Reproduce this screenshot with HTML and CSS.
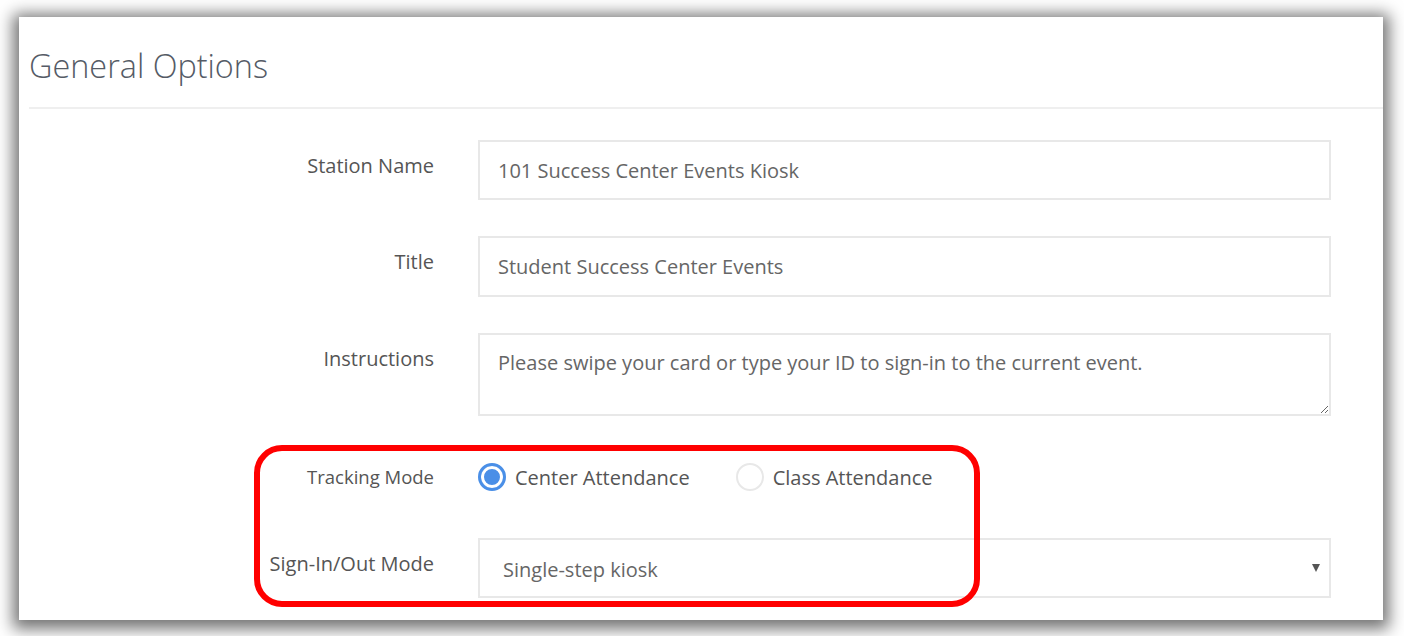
FILE: index.html
```html
<!DOCTYPE html>
<html lang="en">
<head>
<meta charset="utf-8">
<title>General Options</title>
<link rel="stylesheet" href="styles.css">
</head>
<body>
<div class="panel">
  <div class="panel-header">
    <h1 class="panel-title">General Options</h1>
  </div>
  <form class="form">
    <div class="row row-input">
      <label class="label">Station Name</label>
      <input class="field" type="text" value="101 Success Center Events Kiosk">
    </div>
    <div class="row row-input">
      <label class="label">Title</label>
      <input class="field" type="text" value="Student Success Center Events">
    </div>
    <div class="row row-textarea">
      <label class="label">Instructions</label>
      <textarea class="field area">Please swipe your card or type your ID to sign-in to the current event.</textarea>
    </div>
    <div class="row row-radio">
      <label class="label label-small">Tracking Mode</label>
      <div class="radios">
        <span class="radio-item"><span class="radio checked"></span><span class="radio-text">Center Attendance</span></span>
        <span class="radio-item"><span class="radio"></span><span class="radio-text">Class Attendance</span></span>
      </div>
    </div>
    <div class="row row-select">
      <label class="label">Sign-In/Out Mode</label>
      <div class="field select">
        <span class="select-text">Single-step kiosk</span>
        <span class="caret"></span>
      </div>
    </div>
  </form>
  <div class="highlight"></div>
</div>
</body>
</html>
```

FILE: styles.css
```css
html, body {
  margin: 0;
  padding: 0;
  background: #ffffff;
}

body {
  padding: 17px 21px 16px 19px;
  font-family: "Open Sans", "Noto Sans", sans-serif;
  color: #555;
}

.panel {
  position: relative;
  height: 603px;
  background: #fff;
  box-shadow: 0 3px 15px 6px rgba(0, 0, 0, 0.55);
  overflow: hidden;
}

.panel-header {
  box-sizing: border-box;
  margin-left: 10px;
  height: 92px;
  padding-top: 5px;
  border-bottom: 2px solid #efefef;
  display: flex;
  align-items: center;
}

.panel-title {
  margin: 0;
  font-size: 32.4px;
  font-weight: 300;
  color: #555b66;
}

.form {
  padding: 31px 52px 0 0;
  display: flex;
  flex-direction: column;
}

.row {
  display: grid;
  grid-template-columns: 415px 1fr;
  column-gap: 44px;
}

.row-input { height: 60px; margin-bottom: 36px; }
.row-input + .row-input { height: 61px; }
.row-textarea { height: 83px; margin-bottom: 36px; }
.row-radio { height: 50px; margin-bottom: 36px; align-items: center; }
.row-select { height: 60px; }

.label {
  text-align: right;
  font-size: 20px;
  color: #555;
  padding-top: 13px;
  line-height: 26px;
}

.row-radio .label { padding-top: 0; }

.label-small {
  font-size: 18.5px;
}

.field {
  box-sizing: border-box;
  width: 100%;
  height: 100%;
  margin: 0;
  border: 2px solid #e8e8e8;
  border-radius: 0;
  background: #fff;
  font-family: "Open Sans", "Noto Sans", sans-serif;
  font-size: 20px;
  color: #666;
  padding: 0 18px;
  outline: none;
}

.area {
  padding: 14px 18px;
  line-height: 28px;
  resize: vertical;
}

.radios {
  display: flex;
  align-items: center;
  gap: 46px;
}

.radio-item {
  display: flex;
  align-items: center;
  gap: 9px;
  font-size: 20px;
  color: #555;
}

.radio {
  box-sizing: border-box;
  width: 28px;
  height: 28px;
  border-radius: 50%;
  border: 2px solid #e8e8e8;
  background: #fff;
  display: inline-block;
}

.radio.checked {
  border: 3.5px solid #4a8fe7;
  box-shadow: inset 0 0 0 3px #fff, inset 0 0 0 12px #4a8fe7;
}

.select {
  display: flex;
  align-items: center;
  justify-content: space-between;
  padding: 2px 9px 0 23px;
  color: #666;
}

.caret {
  width: 0;
  height: 0;
  border-left: 4px solid transparent;
  border-right: 4px solid transparent;
  border-top: 8px solid #555;
  margin-top: -2px;
}

.highlight {
  position: absolute;
  left: 235px;
  top: 428px;
  width: 726px;
  height: 162px;
  box-sizing: border-box;
  border: 6px solid #ff0000;
  border-radius: 28px;
  pointer-events: none;
}
```
